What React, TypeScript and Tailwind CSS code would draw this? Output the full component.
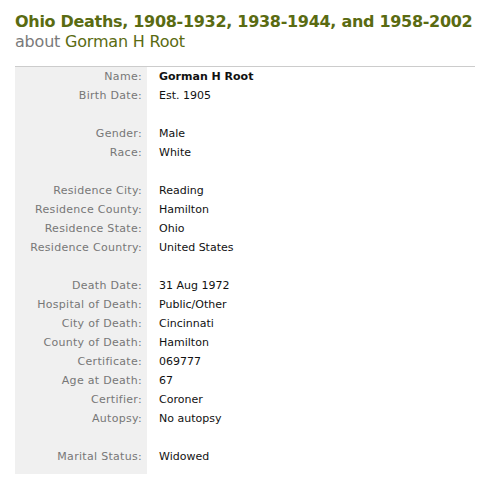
import React from "react";

type Row = { label: string; value: string; bold?: boolean } | null;

const rows: Row[] = [
  { label: "Name:", value: "Gorman H Root", bold: true },
  { label: "Birth Date:", value: "Est. 1905" },
  null,
  { label: "Gender:", value: "Male" },
  { label: "Race:", value: "White" },
  null,
  { label: "Residence City:", value: "Reading" },
  { label: "Residence County:", value: "Hamilton" },
  { label: "Residence State:", value: "Ohio" },
  { label: "Residence Country:", value: "United States" },
  null,
  { label: "Death Date:", value: "31 Aug 1972" },
  { label: "Hospital of Death:", value: "Public/Other" },
  { label: "City of Death:", value: "Cincinnati" },
  { label: "County of Death:", value: "Hamilton" },
  { label: "Certificate:", value: "069777" },
  { label: "Age at Death:", value: "67" },
  { label: "Certifier:", value: "Coroner" },
  { label: "Autopsy:", value: "No autopsy" },
  null,
  { label: "Marital Status:", value: "Widowed" },
];

export default function App() {
  return (
    <div className="w-[502px] h-[485px] bg-white pl-[15px] pt-[12px]">
      <div className="font-['DejaVu_Sans',sans-serif]">
        <div className="text-[16px] leading-[20px] font-bold text-[#5a6b12] tracking-[-0.3px]">
          Ohio Deaths, 1908-1932, 1938-1944, and 1958-2002
        </div>
        <div className="text-[16px] leading-[20px] text-[#5a6b12] tracking-[-0.2px]">
          <span className="text-[#7a7a7a]">about</span> Gorman H Root
        </div>
      </div>
      <div className="mt-[14px] w-[460px] border-t border-[#cccccc]">
        <div className="flex flex-col font-['DejaVu_Sans',sans-serif] text-[11px] pt-[1px] pb-[7px] bg-[linear-gradient(to_right,#f0f0f0_132px,#ffffff_132px)]">
          {rows.map((r, i) =>
            r ? (
              <div key={i} className="flex h-[19px] items-center">
                <div className="w-[132px] pr-[5px] text-right text-[#777777] whitespace-nowrap tracking-[0.3px]">
                  {r.label}
                </div>
                <div
                  className={
                    "pl-[12px] text-[#111111] whitespace-nowrap " +
                    (r.bold ? "font-bold" : "")
                  }
                >
                  {r.value}
                </div>
              </div>
            ) : (
              <div key={i} className="h-[19px]" />
            )
          )}
        </div>
      </div>
    </div>
  );
}
